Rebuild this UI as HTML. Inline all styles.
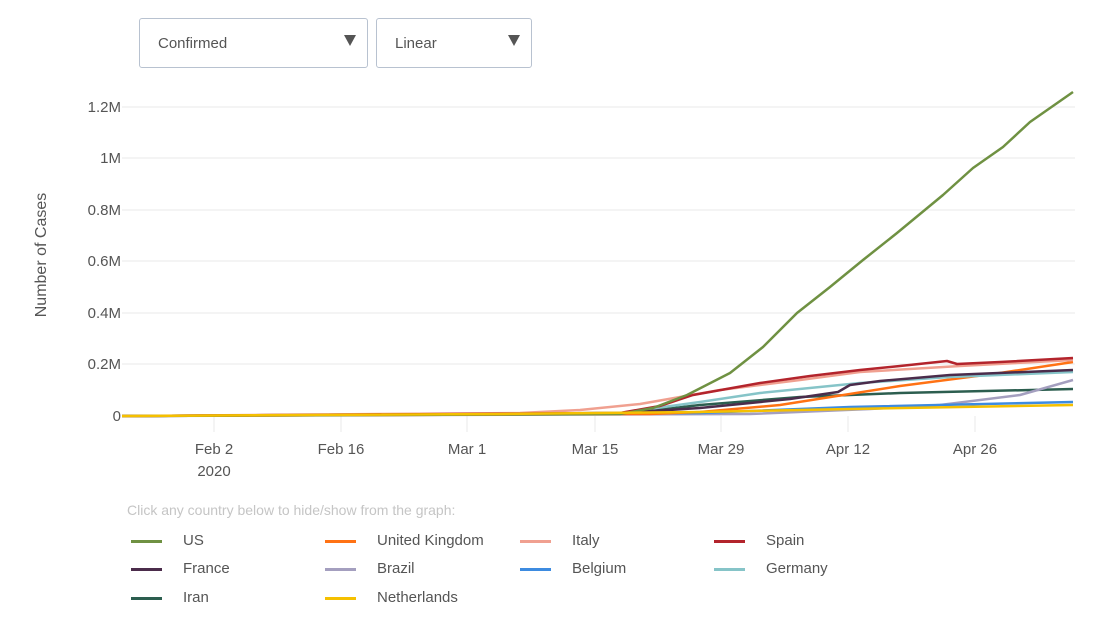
<!DOCTYPE html>
<html><head><meta charset="utf-8"><style>
body{margin:0;background:#fff;width:1112px;height:636px;overflow:hidden;font-family:"Liberation Sans",sans-serif;color:#555}
.sel{position:absolute;top:18px;height:50px;border:1px solid #b8c2d0;border-radius:3px;box-sizing:border-box;font-size:15px;color:#555;padding:16px 0 0 18px}
.sel:after{content:"";position:absolute;right:11px;top:16px;border-left:6px solid transparent;border-right:6px solid transparent;border-top:11px solid #555}
.leg{position:absolute;font-size:15px;color:#555}
.leg i{position:absolute;left:-52px;top:8px;width:31px;height:3px}
</style></head><body>
<div class="sel" style="left:139px;width:229px">Confirmed</div>
<div class="sel" style="left:376px;width:156px">Linear</div>
<svg width="1112" height="636" style="position:absolute;left:0;top:0">
<g stroke="#eaeaea" stroke-width="1">
<line x1="122" x2="1075" y1="107" y2="107"/><line x1="122" x2="1075" y1="158" y2="158"/><line x1="122" x2="1075" y1="210" y2="210"/><line x1="122" x2="1075" y1="261" y2="261"/><line x1="122" x2="1075" y1="313" y2="313"/><line x1="122" x2="1075" y1="364" y2="364"/>
<line x1="214" x2="214" y1="416" y2="432"/><line x1="341" x2="341" y1="416" y2="432"/><line x1="467" x2="467" y1="416" y2="432"/><line x1="595" x2="595" y1="416" y2="432"/><line x1="721" x2="721" y1="416" y2="432"/><line x1="848" x2="848" y1="416" y2="432"/><line x1="975" x2="975" y1="416" y2="432"/>
</g>
<g font-size="15" fill="#555" text-anchor="end" font-family="Liberation Sans">
<text x="121" y="112">1.2M</text><text x="121" y="163">1M</text><text x="121" y="215">0.8M</text><text x="121" y="266">0.6M</text><text x="121" y="318">0.4M</text><text x="121" y="369">0.2M</text><text x="121" y="421">0</text>
</g>
<g font-size="15" fill="#555" text-anchor="middle" font-family="Liberation Sans">
<text x="214" y="454">Feb 2</text><text x="214" y="476">2020</text><text x="341" y="454">Feb 16</text><text x="467" y="454">Mar 1</text><text x="595" y="454">Mar 15</text><text x="721" y="454">Mar 29</text><text x="848" y="454">Apr 12</text><text x="975" y="454">Apr 26</text>
</g>
<text transform="translate(46,255) rotate(-90)" text-anchor="middle" font-size="16" fill="#555" font-family="Liberation Sans">Number of Cases</text>
<g fill="none" stroke-width="2.5" stroke-linejoin="round">
<polyline stroke="#2c5e4f" points="122,416 600,414 640,412 700,405 800,397 900,393 1073,389"/>
<polyline stroke="#a49fbf" points="122,416 750,414 870,409 940,405 1020,395 1073,380"/>
<polyline stroke="#3d8be0" points="122,416 700,413 850,407 1073,402"/>
<polyline stroke="#ff7214" points="122,416 650,414 700,412 780,405 900,386 1000,373 1073,362"/>
<polyline stroke="#86c4c8" points="122,416 620,413 700,402 760,393 860,383 950,377 1073,372"/>
<polyline stroke="#4b2c4b" points="122,416 620,413 700,408 790,399 838,392 850,385 880,381 950,375 1073,370"/>
<polyline stroke="#f0a090" points="122,416 520,413 580,410 640,404 720,390 800,380 860,372 960,366 1073,360"/>
<polyline stroke="#b3242c" points="122,416 620,413 660,406 693,395 760,383 810,376 860,370 900,366 947,361 957,364 1000,362 1073,358"/>
<polyline stroke="#6f9142" points="122,416 620,414 653,408 687,395 730,373 763,347 797,313 830,287 863,260 897,233 943,195 973,168 1003,147 1030,122 1073,92"/>
<polyline stroke="#f5c000" points="122,416 500,414 700,412 850,409 1073,405"/>
</g>
</svg>
<div style="position:absolute;left:127px;top:502px;font-size:14px;color:#c5c5c5">Click any country below to hide/show from the graph:</div>
<div class="leg" style="left:183px;top:532px"><i style="background:#6f9142"></i>US</div>
<div class="leg" style="left:377px;top:532px"><i style="background:#ff7214"></i>United Kingdom</div>
<div class="leg" style="left:572px;top:532px"><i style="background:#f0a090"></i>Italy</div>
<div class="leg" style="left:766px;top:532px"><i style="background:#b3242c"></i>Spain</div>
<div class="leg" style="left:183px;top:560px"><i style="background:#4b2c4b"></i>France</div>
<div class="leg" style="left:377px;top:560px"><i style="background:#a49fbf"></i>Brazil</div>
<div class="leg" style="left:572px;top:560px"><i style="background:#3d8be0"></i>Belgium</div>
<div class="leg" style="left:766px;top:560px"><i style="background:#86c4c8"></i>Germany</div>
<div class="leg" style="left:183px;top:589px"><i style="background:#2c5e4f"></i>Iran</div>
<div class="leg" style="left:377px;top:589px"><i style="background:#f5c000"></i>Netherlands</div>
</body></html>
